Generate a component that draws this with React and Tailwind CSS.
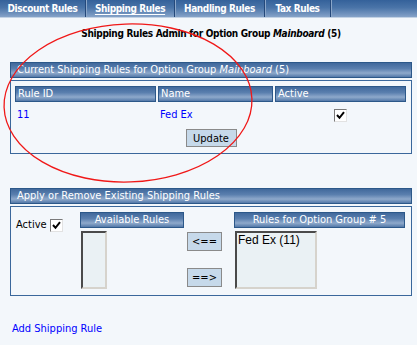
import React from 'react';

const tabs = [
    { label: 'Discount Rules', w: 'w-[86px]' },
    { label: 'Shipping Rules', w: 'w-[89px]', active: true },
    { label: 'Handling Rules', w: 'w-[90px]' },
    { label: 'Tax Rules', w: 'w-[66px]' },
];

function CheckBox() {
    return (
        <span className="inline-flex h-[13px] w-[13px] items-center justify-center border border-t-[#7a7a7a] border-l-[#7a7a7a] border-b-[#e2e2e2] border-r-[#e2e2e2] bg-white">
            <svg width="9" height="9" viewBox="0 0 9 9">
                <path d="M1 4 L3.5 6.8 L8 1.2" fill="none" stroke="#000" strokeWidth="2" />
            </svg>
        </span>
    );
}

function BarHeader({ children, className = '' }) {
    return (
        <div className={`flex items-center border border-[#2c5889] bg-[linear-gradient(to_bottom,#41699c_0%,#5a7fae_40%,#8ea9cb_72%,#5378a8_100%)] text-[11px] text-white ${className}`}>
            {children}
        </div>
    );
}

function ListBox({ children, className = '' }) {
    return (
        <div className={`border-2 border-t-[#4a4a4a] border-l-[#4a4a4a] border-b-[#d6d3cc] border-r-[#d6d3cc] bg-[#eaf1f4] px-[1px] text-[12px] leading-[15px] text-black font-['Liberation_Sans',sans-serif] ${className}`}>
            {children}
        </div>
    );
}

export default function App() {
    return (
        <div className="relative h-[345px] w-[417px] overflow-hidden bg-[#f3f7fb] font-['Tahoma','DejaVu_Sans_Condensed','Liberation_Sans',sans-serif] text-[11px] text-black">
            {/* top tab strip */}
            <div className="flex h-[18px] border-b border-[#c3d2e4] bg-[linear-gradient(to_bottom,#34619a_0%,#4a74a8_45%,#6f91bc_80%,#86a3c8_100%)]">
                {tabs.map((t) => (
                    <div
                        key={t.label}
                        className={`flex items-center justify-center border-r border-[#24487a] shadow-[1px_0_0_#8aa6c9] ${t.w}`}
                    >
                        <span className={`text-[10px] font-bold tracking-[-0.4px] text-white ${t.active ? 'underline underline-offset-2' : ''}`}>
                            {t.label}
                        </span>
                    </div>
                ))}
            </div>

            <div className="pl-[10px] pr-[5px]">
                <h1 className="mt-[9px] text-center text-[10px] leading-[14px] font-bold tracking-[-0.3px]">
                    Shipping Rules Admin for Option Group <i>Mainboard</i> (5)
                </h1>

                {/* current rules */}
                <BarHeader className="mt-[21px] h-[16px] pl-[6px]">
                    Current Shipping Rules for Option Group&nbsp;<i>Mainboard</i>&nbsp;(5)
                </BarHeader>
                <div className="mt-[2px] border border-[#3a679b] px-[4px] pt-[5px] pb-[6px]">
                    <div className="grid grid-cols-[141px_115px_131px] gap-x-[2px]">
                        <BarHeader className="h-[16px] pl-[2px]">Rule ID</BarHeader>
                        <BarHeader className="h-[16px] pl-[2px]">Name</BarHeader>
                        <BarHeader className="h-[16px] pl-[2px]">Active</BarHeader>
                        <div className="flex h-[27px] items-center pl-[2px] text-[#0000ff]">11</div>
                        <div className="flex h-[27px] items-center pl-[2px] text-[#0000ff]">Fed Ex</div>
                        <div className="flex h-[27px] items-center justify-center">
                            <CheckBox />
                        </div>
                    </div>
                    <div className="flex justify-center">
                        <button className="h-[18px] w-[51px] border border-[#8a8a8a] bg-[#c6d9ea] text-[11px] leading-none text-black">
                            Update
                        </button>
                    </div>
                </div>

                {/* apply / remove */}
                <BarHeader className="mt-[34px] h-[16px] pl-[6px]">
                    Apply or Remove Existing Shipping Rules
                </BarHeader>
                <div className="mt-[2px] flex h-[90px] items-start border border-[#3a679b] pt-[5px]">
                    <div className="mt-[5px] flex w-[69px] items-center gap-[3px] pl-[5px]">
                        <span>Active</span>
                        <CheckBox />
                    </div>
                    <div className="w-[104px]">
                        <BarHeader className="h-[16px] justify-center">Available Rules</BarHeader>
                        <ListBox className="mt-[3px] ml-[1px] h-[58px] w-[26px]" />
                    </div>
                    <div className="ml-[3px] flex w-[35px] flex-col gap-[17px] pt-[20px]">
                        <button className="h-[19px] w-[35px] border border-[#8a8a8a] bg-[#c6d9ea] text-[11px] leading-none text-black">&lt;==</button>
                        <button className="h-[19px] w-[35px] border border-[#8a8a8a] bg-[#c6d9ea] text-[11px] leading-none text-black">==&gt;</button>
                    </div>
                    <div className="ml-[12px] w-[171px]">
                        <BarHeader className="h-[16px] justify-center">Rules for Option Group # 5</BarHeader>
                        <ListBox className="mt-[3px] ml-[1px] h-[58px] w-[82px]">Fed Ex (11)</ListBox>
                    </div>
                </div>

                <a className="mt-[25px] ml-[2px] block text-[11px] text-[#0000ff]">Add Shipping Rule</a>
            </div>

            {/* hand-drawn highlight ring */}
            <svg className="pointer-events-none absolute top-0 left-0" width="417" height="345">
                <ellipse cx="128" cy="103" rx="124" ry="79" fill="none" stroke="#f01818" strokeWidth="1.3" transform="rotate(-2 128 103)" />
            </svg>
        </div>
    );
}
